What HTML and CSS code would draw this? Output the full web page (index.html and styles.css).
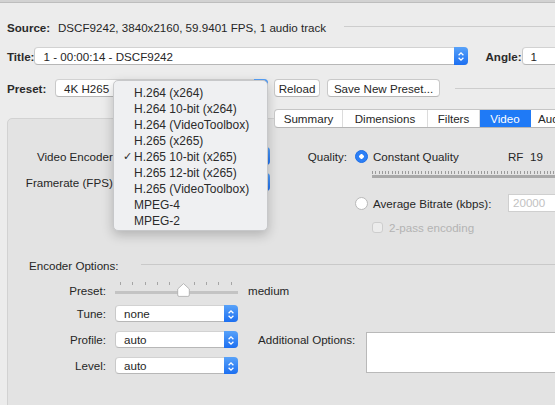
FILE: index.html
```html
<!DOCTYPE html>
<html lang="en">
<head>
  <meta charset="UTF-8" />
  <title>HandBrake - Video</title>
  <link rel="stylesheet" href="styles.css">
</head>
<body>
  <div class="toolbar-edge"></div>

  <div class="window">
    <!-- Source / title / preset rows -->
    <div class="row row-source">
      <span class="lbl lbl-source">Source:</span>
      <span class="source-val">DSCF9242, 3840x2160, 59.9401 FPS, 1 audio track</span>
      <span class="rule rule-source"></span>
    </div>

    <div class="row row-title">
      <span class="lbl lbl-title">Title:</span>
      <div class="popup title-popup">
        <span class="popup-text">1 - 00:00:14 - DSCF9242</span>
        <i class="stepper"><svg viewBox="0 0 14 17" width="14" height="17"><path d="M4.6 7.2 L7 4.8 L9.4 7.2 M4.6 9.8 L7 12.2 L9.4 9.8" /></svg></i>
      </div>
      <span class="lbl lbl-angle">Angle:</span>
      <div class="popup angle-popup"><span class="popup-text">1</span></div>
    </div>

    <div class="row row-preset">
      <span class="lbl lbl-preset">Preset:</span>
      <div class="popup preset-popup">
        <span class="popup-text">4K H265</span>
        <i class="stepper"><svg viewBox="0 0 14 17" width="14" height="17"><path d="M4.6 7.2 L7 4.8 L9.4 7.2 M4.6 9.8 L7 12.2 L9.4 9.8" /></svg></i>
      </div>
      <button class="btn btn-reload">Reload</button>
      <button class="btn btn-save">Save New Preset...</button>
      <span class="rule rule-preset"></span>
    </div>

    <!-- Tabs -->
    <div class="tabs">
      <span class="tab tab-summary">Summary</span>
      <span class="tab tab-dimensions">Dimensions</span>
      <span class="tab tab-filters">Filters</span>
      <span class="tab tab-video active">Video</span>
      <span class="tab tab-audio">Audio</span>
    </div>

    <div class="panel">
      <div class="top-section">
        <div class="col-left">
          <div class="field">
            <span class="field-lbl">Video Encoder:</span>
            <div class="popup enc-popup">
              <span class="popup-text">H.265 10-bit (x265)</span>
              <i class="stepper"><svg viewBox="0 0 14 17" width="14" height="17"><path d="M4.6 7.2 L7 4.8 L9.4 7.2 M4.6 9.8 L7 12.2 L9.4 9.8" /></svg></i>
            </div>
          </div>
          <div class="field">
            <span class="field-lbl">Framerate (FPS):</span>
            <div class="popup enc-popup">
              <span class="popup-text">Same as source</span>
              <i class="stepper"><svg viewBox="0 0 14 17" width="14" height="17"><path d="M4.6 7.2 L7 4.8 L9.4 7.2 M4.6 9.8 L7 12.2 L9.4 9.8" /></svg></i>
            </div>
          </div>
        </div>

        <div class="col-right">
          <div class="q-row">
            <span class="q-lbl">Quality:</span>
            <span class="radio on"></span>
            <span class="q-text">Constant Quality</span>
            <span class="rf">RF</span>
            <span class="rf-val">19</span>
          </div>
          <div class="rf-slider"></div>
          <div class="q-row q-row-bitrate">
            <span class="q-lbl"></span>
            <span class="radio"></span>
            <span class="q-text">Average Bitrate (kbps):</span>
            <span class="textfield">20000</span>
          </div>
          <div class="check-row">
            <span class="checkbox"></span>
            <span class="check-text">2-pass encoding</span>
          </div>
        </div>
      </div>

      <div class="enc-header">
        <span>Encoder Options:</span>
        <span class="rule"></span>
      </div>

      <div class="enc-grid">
        <span class="opt-lbl opt-preset">Preset:</span>
        <div class="speed-slider">
          <svg class="knob" viewBox="0 0 13 14" width="13" height="14"><path d="M6.5 0.6 L12.3 6 V12 Q12.3 13.4 10.9 13.4 H2.1 Q0.7 13.4 0.7 12 V6 Z" /></svg>
        </div>
        <span class="speed-val">medium</span>

        <span class="opt-lbl">Tune:</span>
        <div class="popup opt-popup">
          <span class="popup-text">none</span>
          <i class="stepper"><svg viewBox="0 0 14 17" width="14" height="17"><path d="M4.6 7.2 L7 4.8 L9.4 7.2 M4.6 9.8 L7 12.2 L9.4 9.8" /></svg></i>
        </div>

        <span class="opt-lbl">Profile:</span>
        <div class="popup opt-popup">
          <span class="popup-text">auto</span>
          <i class="stepper"><svg viewBox="0 0 14 17" width="14" height="17"><path d="M4.6 7.2 L7 4.8 L9.4 7.2 M4.6 9.8 L7 12.2 L9.4 9.8" /></svg></i>
        </div>
        <div class="additional">
          <span class="add-lbl">Additional Options:</span>
          <div class="add-box"></div>
        </div>

        <span class="opt-lbl">Level:</span>
        <div class="popup opt-popup">
          <span class="popup-text">auto</span>
          <i class="stepper"><svg viewBox="0 0 14 17" width="14" height="17"><path d="M4.6 7.2 L7 4.8 L9.4 7.2 M4.6 9.8 L7 12.2 L9.4 9.8" /></svg></i>
        </div>
      </div>
    </div>
  </div>

  <!-- Open encoder menu -->
  <ul class="menu">
    <li>H.264 (x264)</li>
    <li>H.264 10-bit (x264)</li>
    <li>H.264 (VideoToolbox)</li>
    <li>H.265 (x265)</li>
    <li class="checked">H.265 10-bit (x265)</li>
    <li>H.265 12-bit (x265)</li>
    <li>H.265 (VideoToolbox)</li>
    <li>MPEG-4</li>
    <li>MPEG-2</li>
  </ul>
</body>
</html>
```

FILE: styles.css
```css
body {
  margin: 0;
  background: #ececec;
  font-family: "Liberation Sans", Arial, sans-serif;
  font-size: 11.6px;
  color: #262626;
  overflow: hidden;
  width: 555px;
  height: 405px;
  position: relative;
}

.toolbar-edge {
  height: 2px;
  background: #d2d2d2;
  border-bottom: 1px solid #bdbdbd;
}

.window {
  padding-left: 7px;
}

.row {
  display: flex;
  align-items: center;
  height: 18px;
  white-space: nowrap;
}

.lbl {
  font-weight: bold;
  color: #2a2a2a;
}

.rule {
  flex: 1;
  height: 1px;
  background: #cdcdcd;
}

/* Source */
.row-source {
  margin-top: 15px;
}

.lbl-source { width: 51px; }

.rule-source {
  margin-left: 18px;
  margin-top: -1px;
}

/* Title */
.row-title {
  margin-top: 11px;
}

.lbl-title { width: 37px; }

.lbl-angle {
  margin-left: 17px;
  width: 45px;
}

/* Popup buttons */
.popup {
  position: relative;
  box-sizing: border-box;
  height: 18px;
  background: #fff;
  border: 1px solid #c9c9c9;
  border-top-color: #d2d2d2;
  border-bottom-color: #b7b7b7;
  border-radius: 4px;
  display: flex;
  align-items: center;
  flex-shrink: 0;
}

.popup-text {
  padding-left: 8px;
  white-space: nowrap;
}

.stepper {
  position: absolute;
  right: -1px;
  top: -1px;
  width: 14px;
  height: 18px;
  border-radius: 0 4px 4px 0;
  background: linear-gradient(#58a2f9, #1c6ff1);
}

.stepper svg {
  display: block;
  margin-top: 0.5px;
  fill: none;
  stroke: #fff;
  stroke-width: 1.3;
}

.title-popup { width: 434px; }

.angle-popup { width: 40px; }

/* Preset row */
.row-preset {
  margin-top: 14px;
}

.lbl-preset { width: 48px; }

.preset-popup { width: 213px; }

.btn {
  height: 18px;
  box-sizing: border-box;
  padding: 0;
  background: #fff;
  border: 1px solid #c9c9c9;
  border-bottom-color: #b7b7b7;
  border-radius: 4px;
  font: inherit;
  color: #262626;
}

.btn-reload {
  margin-left: 6px;
  width: 46px;
}

.btn-save {
  margin-left: 7px;
  width: 113px;
}

.rule-preset {
  margin-left: 15px;
}

/* Tabs */
.tabs {
  position: relative;
  z-index: 1;
  display: flex;
  margin: 12px 0 -10px 267px;
  height: 19px;
  width: 330px;
  box-sizing: border-box;
  background: #fff;
  border: 1px solid #c6c6c6;
  border-bottom-color: #b5b5b5;
  border-radius: 4px;
  overflow: hidden;
}

.tab {
  display: flex;
  align-items: center;
  justify-content: center;
  border-right: 1px solid #dcdcdc;
  white-space: nowrap;
}

.tab-summary { width: 67px; }
.tab-dimensions { width: 84px; }
.tab-filters { width: 51px; }
.tab-video { width: 50px; }
.tab-audio { width: 60px; justify-content: flex-start; padding-left: 7px; }

.tab.active {
  background: #1f7af6;
  color: #fff;
  border-right-color: #1f7af6;
}

/* Panel */
.panel {
  box-sizing: border-box;
  height: 300px;
  margin-right: -20px;
  background: #e3e3e3;
  border: 1px solid #d2d2d2;
  border-radius: 5px;
}

.top-section {
  display: flex;
  padding-top: 28px;
}

.col-left {
  width: 282px;
  display: flex;
  flex-direction: column;
  gap: 8px;
}

.field {
  display: flex;
  align-items: center;
  height: 18px;
}

.field-lbl {
  width: 108px;
  text-align: right;
  white-space: nowrap;
}

.enc-popup {
  margin-left: 4px;
  width: 150px;
}

.col-right {
  display: flex;
  flex-direction: column;
}

.q-row {
  display: flex;
  align-items: center;
  height: 18px;
  white-space: nowrap;
}

.q-lbl {
  width: 57px;
  text-align: right;
}

.radio {
  box-sizing: border-box;
  width: 13px;
  height: 13px;
  margin-left: 8px;
  border-radius: 50%;
  background: #fff;
  border: 1px solid #b9b9b9;
  flex-shrink: 0;
}

.radio.on {
  background: #2c7ff6 radial-gradient(circle, #fff 0 2px, transparent 2.5px);
  border-color: #1e6fe6;
}

.q-text {
  margin-left: 5px;
  width: 135px;
}

.rf {
  width: 22px;
}

.rf-val {
  width: 20px;
}

.rf-slider {
  margin: 6px 0 0 82px;
  width: 200px;
  height: 7px;
  background:
    linear-gradient(#a9a9a9, #a9a9a9) 0 4px / 100% 3px no-repeat,
    repeating-linear-gradient(90deg, #9a9a9a 0 1px, transparent 1px 3.3px) 0 0 / 100% 3px no-repeat;
}

.q-row-bitrate {
  margin-top: 16px;
}

.q-row-bitrate .q-text {
  width: 135px;
}

.textfield {
  box-sizing: border-box;
  height: 18px;
  width: 60px;
  padding-left: 4px;
  line-height: 16px;
  background: #fff;
  border: 1px solid #cfcfcf;
  color: #c2c2c2;
}

.check-row {
  display: flex;
  align-items: center;
  height: 14px;
  margin: 8px 0 0 82px;
}

.checkbox {
  box-sizing: border-box;
  width: 11px;
  height: 11px;
  border: 1px solid #cdcdcd;
  border-radius: 3px;
  background: #ececec;
}

.check-text {
  margin-left: 6px;
  color: #b3b3b3;
  white-space: nowrap;
}

/* Encoder options */
.enc-header {
  display: flex;
  align-items: center;
  height: 16px;
  margin-top: 23px;
  padding-left: 21px;
}

.enc-header .rule {
  margin-left: 22px;
  margin-top: -1px;
  background: #c9c9c9;
}

.enc-grid {
  display: grid;
  grid-template-columns: 98px 123px 1fr;
  grid-template-rows: 26px 26px 26px 17px;
  column-gap: 9px;
  margin-top: 6px;
}

.opt-lbl {
  grid-column: 1;
  text-align: right;
  line-height: 17px;
}

.opt-preset {
  padding-top: 3px;
}

.opt-popup {
  grid-column: 2;
  height: 17px;
}

.opt-popup .stepper {
  height: 17px;
}

.speed-slider {
  grid-column: 2;
  position: relative;
  margin-top: 3px;
  height: 17px;
  background:
    linear-gradient(#c3c3c3, #c3c3c3) 0 9px / 100% 3px no-repeat,
    repeating-linear-gradient(90deg, transparent 0 5px, #a5a5a5 5px 6px, transparent 6px 12.3px) 0 0 / 100% 3px no-repeat;
}

.knob {
  position: absolute;
  left: 62px;
  top: 1px;
  fill: #fff;
  stroke: #a9a9a9;
  stroke-width: 0.8;
}

.speed-val {
  grid-column: 3;
  margin-left: 1px;
  padding-top: 3px;
  line-height: 17px;
}

.additional {
  grid-column: 3;
  grid-row: 3 / span 2;
  display: flex;
}

.add-lbl {
  margin-left: 11px;
  width: 100px;
  line-height: 17px;
  white-space: nowrap;
}

.add-box {
  margin: 1px 0 0 8px;
  flex: 1;
  height: 41px;
  box-sizing: border-box;
  background: #fff;
  border: 1px solid #b9b9b9;
}

/* Open popup menu */
.menu {
  position: absolute;
  left: 113px;
  top: 80px;
  width: 155px;
  height: 151px;
  box-sizing: border-box;
  margin: 0;
  padding: 4px 0 0;
  list-style: none;
  background: #eff0f2;
  border: 1px solid #c7c8ca;
  border-radius: 5px;
  box-shadow: 0 4px 12px rgba(0, 0, 0, 0.22);
  font-size: 12px;
  color: #2b2b2b;
}

.menu li {
  position: relative;
  height: 16px;
  line-height: 16px;
  padding-left: 20px;
  white-space: nowrap;
}

.menu li.checked::before {
  content: "\2713";
  position: absolute;
  left: 9px;
  font-family: "DejaVu Sans", sans-serif;
  font-size: 11px;
}
```
